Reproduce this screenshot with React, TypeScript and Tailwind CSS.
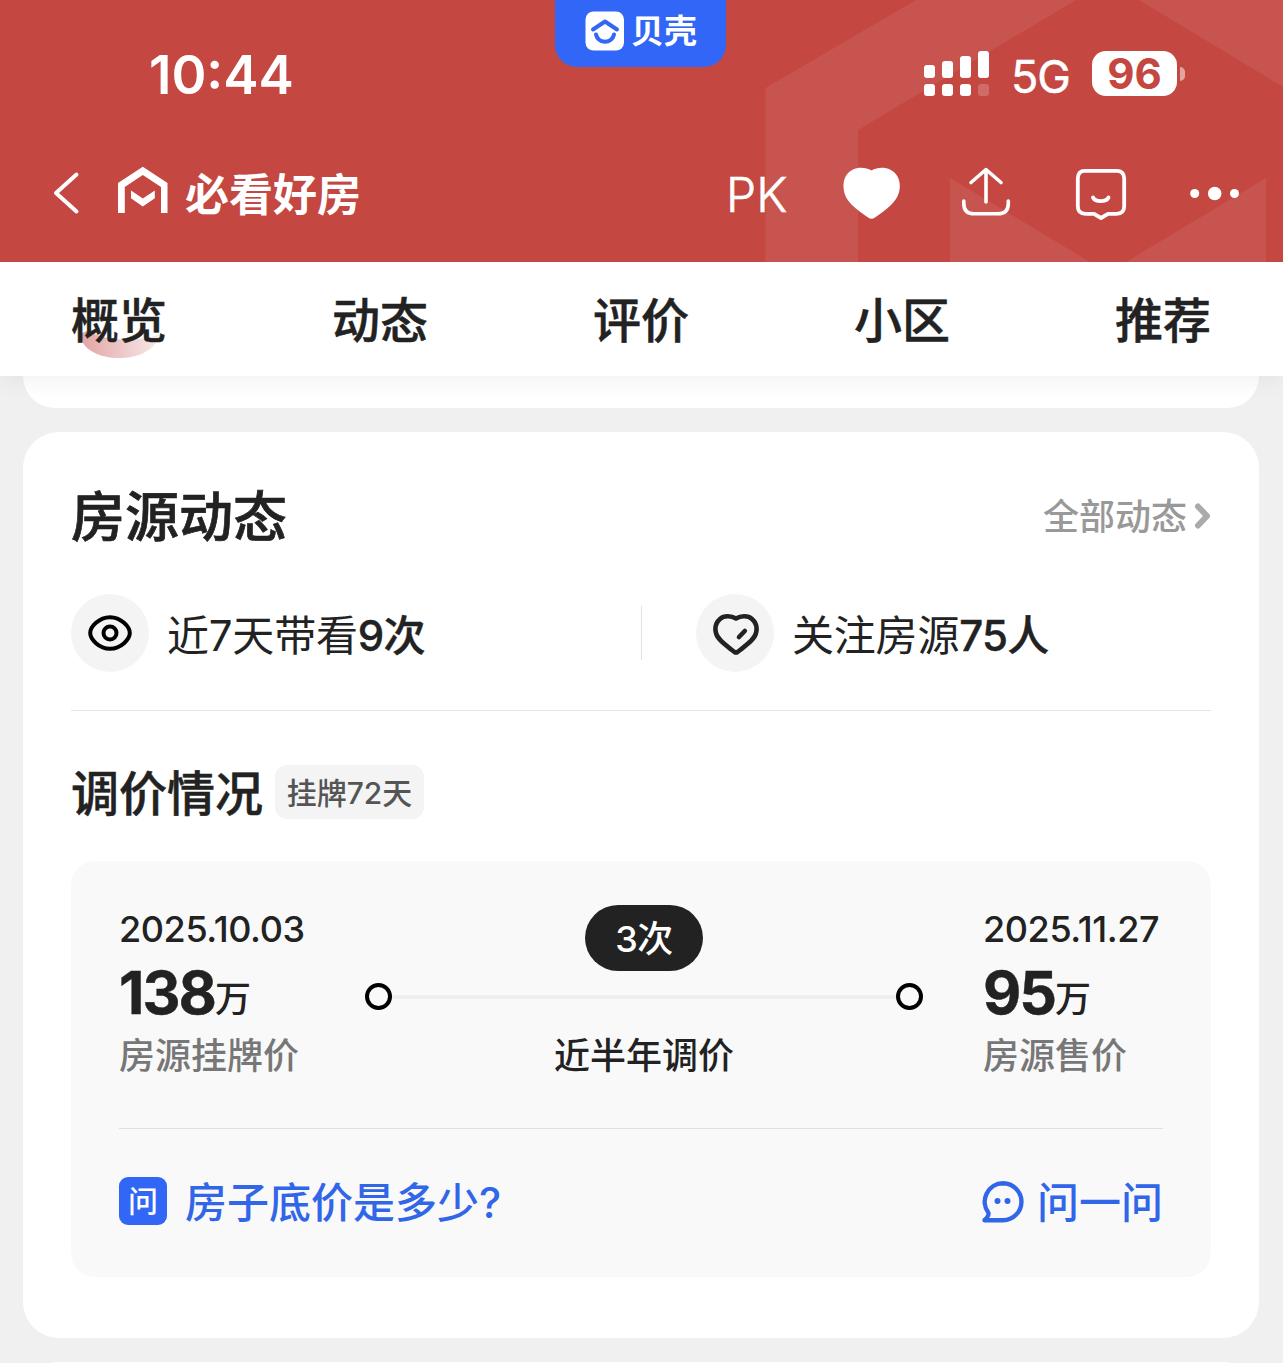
import type { ReactNode } from "react";

const tabs = ["概览", "动态", "评价", "小区", "推荐"];

// height of each column of the dual-sim signal icon
const signal = [
  { y: 14, h: 13 },
  { y: 10, h: 17 },
  { y: 5, h: 22 },
  { y: 0, h: 27 },
];

function HeaderPattern() {
  return (
    <svg className="absolute inset-0" width="1283" height="262" viewBox="0 0 1283 262" fill="#c8544f">
      <path d="M765.5 262V88L916 0H1076L858 130V262Z" />
      <path d="M1139 0H1283V87Z" />
      <path d="M950 262V178L1090 262Z" />
      <path d="M1266 262V178L1126 262Z" />
    </svg>
  );
}

function BrandBadge() {
  return (
    <div className="absolute left-[555px] top-0 flex h-[67px] w-[171px] items-start rounded-b-[22px] bg-[#3166f6] pl-[30px] pt-[11px]">
      <svg width="40" height="40" viewBox="0 0 40 40" fill="none">
        <rect x="0.5" y="0.5" width="38.5" height="39" rx="8" fill="#fff" />
        <path d="M8 18.5L20 10.5L32 18.5" stroke="#3166f6" strokeWidth="4" strokeLinecap="round" strokeLinejoin="round" />
        <path d="M11 23.500C13 33 27 33 29 23.500" stroke="#3166f6" strokeWidth="4" strokeLinecap="round" />
      </svg>
      <span className="ml-[6px] text-[33px] font-bold leading-[40px] text-white">贝壳</span>
    </div>
  );
}

function StatusBar() {
  return (
    <div className="relative flex h-[150px] items-center pl-[149px] text-white">
      <span className="w-[775px] text-[53px] font-semibold leading-none">10:44</span>
      <svg className="mb-[3px]" width="66" height="45" viewBox="0 0 66 45" fill="#fff">
        {signal.map((bar, i) => (
          <g key={i}>
            <rect x={i * 18} y={bar.y} width="11" height={bar.h} rx="3" />
            <rect x={i * 18} y="33" width="11" height="12" rx="3" opacity={i === 3 ? 0.2 : 1} />
          </g>
        ))}
      </svg>
      <span className="ml-[21px] mt-[2px] w-[81px] text-[45px] leading-none tracking-[-1px] [-webkit-text-stroke:0.5px_white]">5G</span>
      <div className="mb-[3px] flex items-center">
        <div className="flex h-[45px] w-[85px] items-center justify-center rounded-[14px] bg-white text-[42px] font-bold leading-none text-[#c44841]">
          96
        </div>
        <div className="ml-[3px] h-[14px] w-[5px] rounded-r-full bg-white/50" />
      </div>
    </div>
  );
}

function NavBar() {
  return (
    <div className="relative flex h-[86px] items-center text-white">
      <svg className="ml-[50px]" width="32" height="48" viewBox="50 169 32 48" fill="none">
        <path d="M76.5 174.5L56 193L76.5 211.5" stroke="#fff" strokeWidth="4" strokeLinecap="round" strokeLinejoin="round" />
      </svg>
      <svg className="ml-[34px]" width="54" height="54" viewBox="116 166 54 54" fill="#fff">
        <path d="M118 213V183L142.8 166.8L167.5 183V213H161V187L142.8 175L124.8 187V213Z" />
        <path d="M131 190.5L142.8 198.5L154.8 190.5V198.3L142.8 206.5L131 198.3Z" />
      </svg>
      <span className="ml-[15px] mt-[3px] w-[541px] text-[44px] font-bold leading-none">必看好房</span>
      <span className="mt-[3px] w-[116px] whitespace-nowrap text-[48px] font-light leading-none [-webkit-text-stroke:0.6px_white]">PK</span>
      <svg width="60" height="58" viewBox="842 165 60 58" fill="#fff">
        <path d="M871.5 171.500C866 168 858 168 853 170.500C846 174 843.500 180 843.500 187C843.500 195 847 201 852 206C857 211 863 215 868 218.500Q871.500 221 875 218.500C880 215 886 211 891 206C896 201 899.800 195 899.800 187C899.800 180 897 174 890 170.500C885 168 877 168 871.500 171.500Z" />
      </svg>
      <svg className="ml-[58px]" width="52" height="54" viewBox="960 166 52 54" fill="none" stroke="#fff" strokeWidth="3.6" strokeLinecap="round" strokeLinejoin="round">
        <path d="M986 202V169.500M971 182.500L986 169.500L1001 182.500" />
        <path d="M963.800 201V203.500Q963.800 213.800 974 213.800H998Q1008.300 213.800 1008.300 203.500V201" />
      </svg>
      <svg className="ml-[62px]" width="54" height="56" viewBox="1074 165 54 56" fill="none" stroke="#fff" strokeWidth="3.8" strokeLinecap="round" strokeLinejoin="round">
        <path d="M1085 170.800H1116.500Q1124.200 170.800 1124.200 178.500V206Q1124.200 213.800 1116.500 213.800H1108L1101 218L1094 213.800H1085.500Q1077.800 213.800 1077.800 206V178.500Q1077.800 170.800 1085 170.800Z" />
        <path d="M1093 197.500C1095.500 202.300 1106 202.300 1108.500 197.500" />
      </svg>
      <svg className="ml-[60px]" width="54" height="20" viewBox="1188 183 54 20" fill="#fff">
        <circle cx="1194.700" cy="193.500" r="4.500" />
        <circle cx="1214.700" cy="193.500" r="6.800" />
        <circle cx="1234.500" cy="193.500" r="4.500" />
      </svg>
    </div>
  );
}

function TabBar() {
  return (
    <div className="relative z-10 flex h-[114px] items-center justify-between bg-white pl-[71px] pr-[72px] shadow-[0_4px_24px_rgba(0,0,0,0.06)]">
      {tabs.map((tab, i) => (
        <div key={tab} className="relative mt-[4px] text-[48px] font-medium leading-[60px] [-webkit-text-stroke:0.5px_#222]">
          {i === 0 && (
            <svg className="absolute left-[9px] top-[39px]" width="80" height="30" viewBox="0 0 80 30">
              <defs>
                <linearGradient id="smile" x1="0" x2="1">
                  <stop offset="0" stopColor="#e3a3a3" />
                  <stop offset="1" stopColor="#f7e9e9" />
                </linearGradient>
              </defs>
              <path d="M0 4C3 36 75 36 79 4C65 12 20 12 9 0Z" fill="url(#smile)" />
            </svg>
          )}
          <span className="relative">{tab}</span>
        </div>
      ))}
    </div>
  );
}

function Stat({ icon, label, value }: { icon: ReactNode; label: string; value: string }) {
  return (
    <div className="flex items-center">
      <div className="flex size-[78px] items-center justify-center rounded-full bg-[#f4f4f4]">{icon}</div>
      <div className="ml-[18px] mt-[5px] text-[42px] leading-none tracking-[-0.2px]">
        {label}
        <span className="font-medium tracking-[-0.7px] [-webkit-text-stroke:0.4px_#222]">{value}</span>
      </div>
    </div>
  );
}

function Price({ date, price, label }: { date: string; price: string; label: string }) {
  return (
    <div className="flex flex-col whitespace-nowrap">
      <div className="mt-px text-[36px] font-medium leading-[46px] tracking-[-0.4px]">{date}</div>
      <div className="mt-[5px] flex h-[72px] text-[59px] font-bold leading-[72px] tracking-[-2px] [-webkit-text-stroke:0.4px_#222]">
        {price}
        <span className="mt-[6px] text-[36px] font-medium tracking-normal [-webkit-text-stroke:0]">万</span>
      </div>
      <div className="mt-[4px] text-[36px] font-medium leading-[46px] text-[#777]">{label}</div>
    </div>
  );
}

function PricePanel() {
  return (
    <div className="mt-[42px] h-[416px] rounded-[24px] bg-[#f9f9f9] px-[48px] pt-[44px]">
      <div className="flex h-[224px] border-b border-[#e0e0e0]">
        <div className="w-[246px]">
          <Price date="2025.10.03" price="138" label="房源挂牌价" />
        </div>
        <div className="flex w-[558px] flex-col items-center">
          <div className="flex h-[66px] w-[118px] items-center justify-center rounded-[33px] bg-[#222] pt-px text-[36px] font-medium leading-none tracking-[-0.5px] text-white">
            3次
          </div>
          <div className="mt-[12px] flex w-full items-center">
            <div className="size-[27px] rounded-full border-4 border-black" />
            <div className="h-[4px] flex-1 bg-[#eee]" />
            <div className="size-[27px] rounded-full border-4 border-black" />
          </div>
          <div className="mt-[22px] text-[36px] font-medium leading-[48px]">近半年调价</div>
        </div>
        <div className="ml-[60px]">
          <Price date="2025.11.27" price="95" label="房源售价" />
        </div>
      </div>
      <div className="mt-[48px] flex h-[48px] items-center text-[42px] font-medium leading-none text-[#3166e8]">
        <div className="flex size-[48px] items-center justify-center rounded-[9px] bg-[#3166f6] text-[30px] text-white">问</div>
        <span className="ml-[18px] mt-[4px]">房子底价是多少?</span>
        <svg className="ml-auto mt-px" width="42" height="42" viewBox="0 0 42 42" fill="none">
          <path
            d="M21 2.300A18.400 18.400 0 0 1 21 39.200H2.500Q7 35 6.500 32A18.500 18.500 0 0 1 21 2.300Z"
            stroke="currentColor"
            strokeWidth="4.400"
            strokeLinejoin="round"
          />
          <circle cx="15.500" cy="20" r="3" fill="currentColor" />
          <circle cx="25.500" cy="20" r="3" fill="currentColor" />
        </svg>
        <span className="ml-[13px] mt-[4px]">问一问</span>
      </div>
    </div>
  );
}

function HouseActivity() {
  return (
    <div className="mt-[24px] h-[906px] rounded-[36px] bg-white px-[48px] pt-[48px]">
      <div className="flex h-[72px] items-center justify-between">
        <h2 className="mt-[4px] text-[54px] font-medium leading-none [-webkit-text-stroke:0.7px_#222]">房源动态</h2>
        <div className="flex items-center text-[36px] font-medium leading-none text-[#999]">
          <span className="mt-px">全部动态</span>
          <svg className="ml-[7px]" width="17" height="26" viewBox="0 0 17 26" fill="none">
            <path d="M4 3.500L13 13L4 22.500" stroke="#aaa" strokeWidth="6" strokeLinecap="round" strokeLinejoin="round" />
          </svg>
        </div>
      </div>

      <div className="mt-[42px] flex h-[117px] border-b border-[#e4e4e4]">
        <div className="flex h-[78px] w-full items-center">
          <div className="w-[570px]">
            <Stat
              label="近7天带看"
              value="9次"
              icon={
                <svg width="44" height="36" viewBox="0 0 44 36" fill="none" stroke="#000" strokeWidth="4">
                  <path d="M2.200 18C2.200 12 11 2.200 22 2.200S41.800 12 41.800 18S33 33.800 22 33.800S2.200 24 2.200 18Z" />
                  <circle cx="22" cy="18" r="6.500" />
                </svg>
              }
            />
          </div>
          <div className="h-[54px] w-px bg-[#e2e2e2]" />
          <div className="ml-[54px]">
            <Stat
              label="关注房源"
              value="75人"
              icon={
                <svg className="ml-[2px] mt-[2px]" width="46" height="46" viewBox="713 611 46 46" fill="none" stroke="#222" strokeWidth="4.600" strokeLinecap="round" strokeLinejoin="round">
                  <path d="M736 618.500C731 615.500 724 615.500 720 619C716 622.500 714.700 628 716 633C717.500 640 727 646 734.500 652Q736 653 737.500 652C745 646 754.500 640 756 633C757.300 628 756 622.500 752 619C748 615.500 741 615.500 736 618.500Z" />
                  <path d="M744.800 631L739 637" />
                </svg>
              }
            />
          </div>
        </div>
      </div>

      <div className="mt-[54px] flex h-[54px] items-center">
        <h3 className="mt-[3px] text-[48px] font-medium leading-none [-webkit-text-stroke:0.5px_#222]">调价情况</h3>
        <div className="ml-[12px] flex h-[54px] w-[149px] items-center justify-center rounded-[12px] bg-[#f4f4f4] pt-px text-[30px] font-medium leading-none text-[#555]">
          挂牌72天
        </div>
      </div>

      <PricePanel />
    </div>
  );
}

export default function App() {
  return (
    <div className="h-[1363px] w-[1283px] overflow-hidden bg-[#f0f0f0] font-[Inter,'Noto_Sans_CJK_SC',sans-serif] text-[#222]">
      <header className="relative z-20 h-[262px] bg-[#c44841]">
        <HeaderPattern />
        <BrandBadge />
        <StatusBar />
        <NavBar />
      </header>
      <TabBar />
      <main className="pl-[23px] pr-[24px]">
        <div className="h-[32px] rounded-b-[36px] bg-white" />
        <HouseActivity />
        <div className="mt-[24px] h-[80px] rounded-t-[36px] bg-white" />
      </main>
    </div>
  );
}
